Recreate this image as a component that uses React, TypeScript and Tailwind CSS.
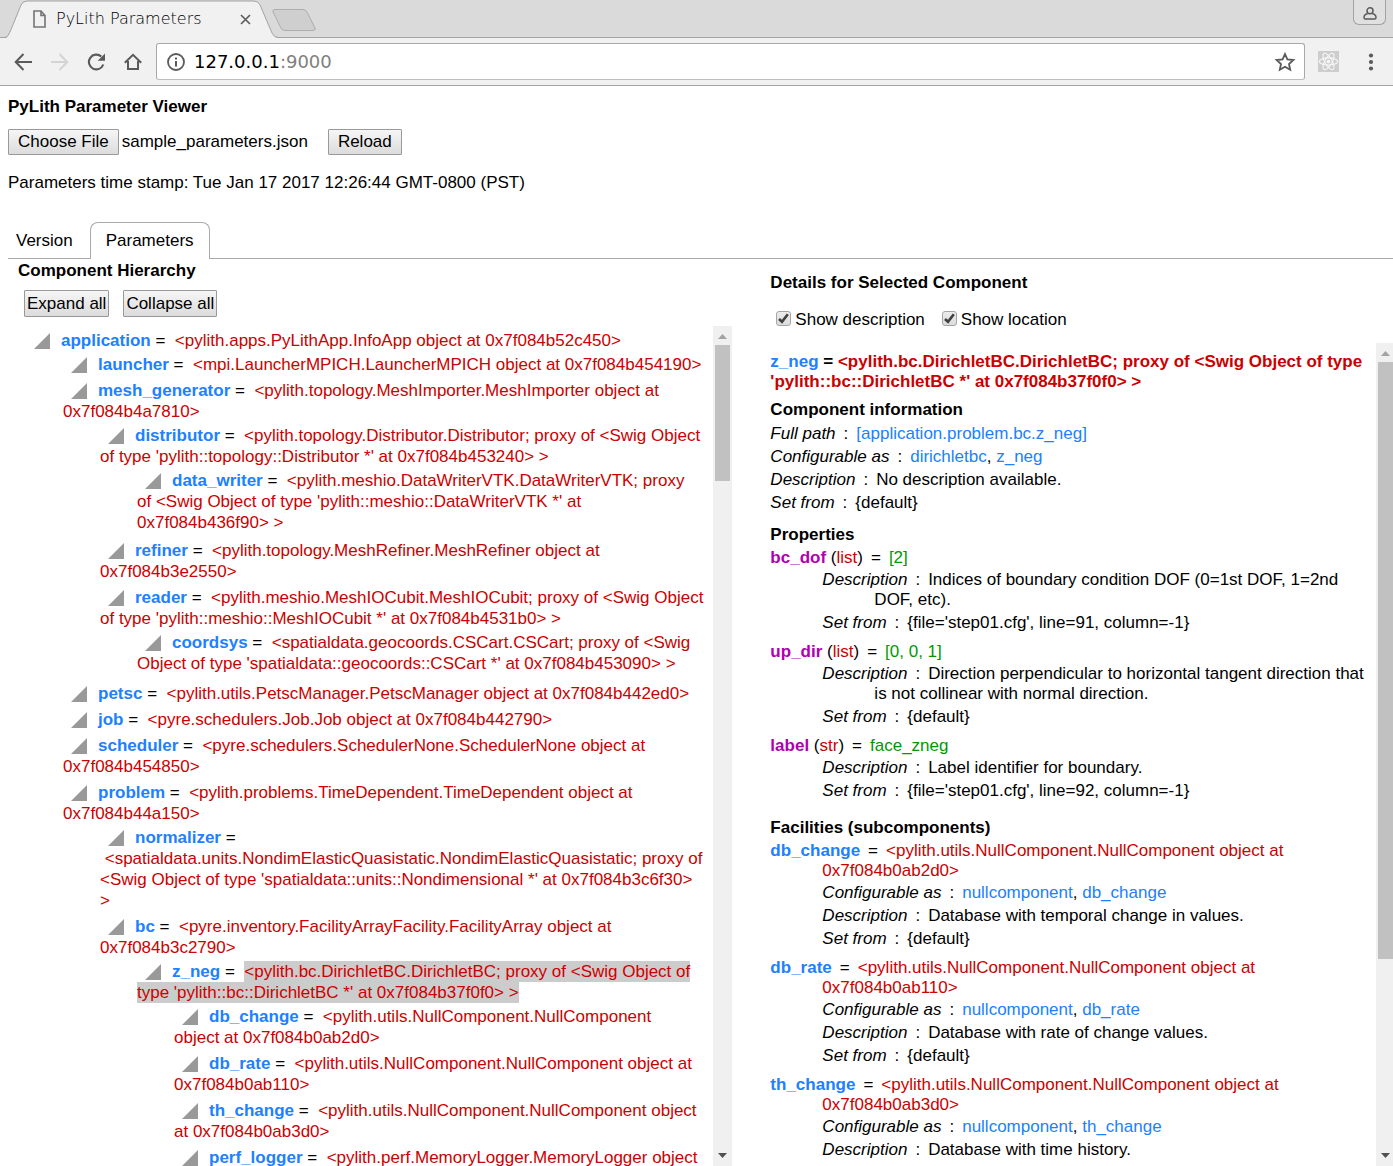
import { Fragment, useState } from "react";
import type { ReactNode } from "react";

type TreeNode = {
  name: string;
  value: string;
  selected?: boolean;
  children?: TreeNode[];
};

type Facility = {
  name: string;
  value: string;
  aliases: string[];
  description: string;
  location: string;
};

const tree: TreeNode = {
  name: "application",
  value: "<pylith.apps.PyLithApp.InfoApp object at 0x7f084b52c450>",
  children: [
    { name: "launcher", value: "<mpi.LauncherMPICH.LauncherMPICH object at 0x7f084b454190>" },
    {
      name: "mesh_generator",
      value: "<pylith.topology.MeshImporter.MeshImporter object at 0x7f084b4a7810>",
      children: [
        {
          name: "distributor",
          value:
            "<pylith.topology.Distributor.Distributor; proxy of <Swig Object of type 'pylith::topology::Distributor *' at 0x7f084b453240> >",
          children: [
            {
              name: "data_writer",
              value:
                "<pylith.meshio.DataWriterVTK.DataWriterVTK; proxy of <Swig Object of type 'pylith::meshio::DataWriterVTK *' at 0x7f084b436f90> >",
            },
          ],
        },
        { name: "refiner", value: "<pylith.topology.MeshRefiner.MeshRefiner object at 0x7f084b3e2550>" },
        {
          name: "reader",
          value:
            "<pylith.meshio.MeshIOCubit.MeshIOCubit; proxy of <Swig Object of type 'pylith::meshio::MeshIOCubit *' at 0x7f084b4531b0> >",
          children: [
            {
              name: "coordsys",
              value:
                "<spatialdata.geocoords.CSCart.CSCart; proxy of <Swig Object of type 'spatialdata::geocoords::CSCart *' at 0x7f084b453090> >",
            },
          ],
        },
      ],
    },
    { name: "petsc", value: "<pylith.utils.PetscManager.PetscManager object at 0x7f084b442ed0>" },
    { name: "job", value: "<pyre.schedulers.Job.Job object at 0x7f084b442790>" },
    { name: "scheduler", value: "<pyre.schedulers.SchedulerNone.SchedulerNone object at 0x7f084b454850>" },
    {
      name: "problem",
      value: "<pylith.problems.TimeDependent.TimeDependent object at 0x7f084b44a150>",
      children: [
        {
          name: "normalizer",
          value:
            "<spatialdata.units.NondimElasticQuasistatic.NondimElasticQuasistatic; proxy of <Swig Object of type 'spatialdata::units::Nondimensional *' at 0x7f084b3c6f30> >",
        },
        {
          name: "bc",
          value: "<pyre.inventory.FacilityArrayFacility.FacilityArray object at 0x7f084b3c2790>",
          children: [
            {
              name: "z_neg",
              value:
                "<pylith.bc.DirichletBC.DirichletBC; proxy of <Swig Object of type 'pylith::bc::DirichletBC *' at 0x7f084b37f0f0> >",
              selected: true,
              children: [
                { name: "db_change", value: "<pylith.utils.NullComponent.NullComponent object at 0x7f084b0ab2d0>" },
                { name: "db_rate", value: "<pylith.utils.NullComponent.NullComponent object at 0x7f084b0ab110>" },
                { name: "th_change", value: "<pylith.utils.NullComponent.NullComponent object at 0x7f084b0ab3d0>" },
                { name: "perf_logger", value: "<pylith.perf.MemoryLogger.MemoryLogger object at 0x7f084b0ab450>" },
              ],
            },
          ],
        },
      ],
    },
  ],
};

const properties = [
  {
    name: "bc_dof",
    type: "list",
    value: "[2]",
    description: "Indices of boundary condition DOF (0=1st DOF, 1=2nd DOF, etc).",
    location: "{file='step01.cfg', line=91, column=-1}",
  },
  {
    name: "up_dir",
    type: "list",
    value: "[0, 0, 1]",
    description: "Direction perpendicular to horizontal tangent direction that is not collinear with normal direction.",
    location: "{default}",
  },
  {
    name: "label",
    type: "str",
    value: "face_zneg",
    description: "Label identifier for boundary.",
    location: "{file='step01.cfg', line=92, column=-1}",
  },
];

const facilities: Facility[] = [
  {
    name: "db_change",
    value: "<pylith.utils.NullComponent.NullComponent object at 0x7f084b0ab2d0>",
    aliases: ["nullcomponent", "db_change"],
    description: "Database with temporal change in values.",
    location: "{default}",
  },
  {
    name: "db_rate",
    value: "<pylith.utils.NullComponent.NullComponent object at 0x7f084b0ab110>",
    aliases: ["nullcomponent", "db_rate"],
    description: "Database with rate of change values.",
    location: "{default}",
  },
  {
    name: "th_change",
    value: "<pylith.utils.NullComponent.NullComponent object at 0x7f084b0ab3d0>",
    aliases: ["nullcomponent", "th_change"],
    description: "Database with time history.",
    location: "{default}",
  },
];

function BrowserChrome() {
  return (
    <header className="shrink-0 font-['DejaVu_Sans',sans-serif]">
      <div className="relative flex h-[38px] items-start border-b border-[#a3a3a3] bg-[#dadada]">
        <div className="relative h-[38px] w-[276px] shrink-0">
          <svg className="absolute top-0 left-0" width="320" height="38" viewBox="0 0 320 38" fill="none">
            <path d="M6 38 C8 37 9 35 10 32 L21 5 Q23 1 27 1 H254 Q258 1 260 5 L272 33 Q274 37 277 38 Z" fill="#f1f1f1" />
            <path
              d="M0 37.5 H5 Q8 37 10 32 L21 5 Q23 1 27 1 H254 Q258 1 260 5 L272 33 Q274 37.500 278 37.500"
              stroke="#a3a3a3"
            />
            <path
              d="M275 9.500 H303 Q306 9.500 307.500 13 L315 28 Q316 30.500 313 30.500 H285 Q282 30.500 281 28 L273 12 Q272 9.500 275 9.500 Z"
              fill="#cfcfcf"
              stroke="#adadad"
            />
          </svg>
          <div className="relative flex h-[38px] items-center pl-[33px] text-base text-black">
            <svg width="13" height="18" viewBox="0 0 13 18" fill="none" stroke="#747474" strokeWidth="1.600">
              <path d="M1 1 H8 L12 5.500 V17 H1 Z M8 1 V5.500 H12" />
            </svg>
            <span className="ml-[10px] font-extralight">PyLith Parameters</span>
            <button aria-label="Close tab" className="absolute top-[14px] left-[240px]">
              <svg width="11" height="11" viewBox="0 0 11 11" stroke="#5a5a5a" strokeWidth="1.600">
                <path d="M1 1 L10 10 M10 1 L1 10" />
              </svg>
            </button>
          </div>
        </div>
        <button
          aria-label="Profile"
          className="mr-[7px] ml-auto flex h-[25px] w-[33px] items-end justify-center rounded-b-md border-x border-b border-[#a3a3a3] bg-[#e0e0e0] pb-[4px]"
        >
          <svg width="14" height="13" viewBox="0 0 14 13" fill="none" stroke="#5a5a5a" strokeWidth="1.500">
            <circle cx="7" cy="3.800" r="3" />
            <path d="M4.800 6.600 Q1 7.500 1 10.500 Q1 12 2.500 12 H11.500 Q13 12 13 10.500 Q13 7.500 9.200 6.600" />
          </svg>
        </button>
      </div>
      <div className="flex h-12 items-center border-b border-[#a3a3a3] bg-[#f1f1f1] pl-[14px]">
        <button aria-label="Back">
          <svg width="19" height="18" viewBox="0 0 19 18" fill="none" stroke="#5a5a5a" strokeWidth="2">
            <path d="M18 9 H2 M9.500 1 L1.700 9 L9.500 17" />
          </svg>
        </button>
        <button aria-label="Forward" className="ml-[17px]">
          <svg width="19" height="18" viewBox="0 0 19 18" fill="none" stroke="#d4d4d4" strokeWidth="2">
            <path d="M1 9 H17 M9.500 1 L17.300 9 L9.500 17" />
          </svg>
        </button>
        <button aria-label="Refresh" className="ml-[18px]">
          <svg width="19" height="18" viewBox="0 0 19 18" fill="none">
            <path d="M16.300 11.500 A7.400 7.400 0 1 1 14.300 3.500" stroke="#5a5a5a" strokeWidth="2.100" />
            <path d="M18 0.500 V7.800 H10.700 Z" fill="#5a5a5a" />
          </svg>
        </button>
        <button aria-label="Home" className="ml-[18px]">
          <svg width="18" height="18" viewBox="0 0 18 18" fill="none" stroke="#5a5a5a" strokeWidth="2">
            <path d="M0.800 9.800 L9 1.800 L17.200 9.800 M4 8 V16 H14 V8" />
          </svg>
        </button>
        <div className="ml-[14px] flex h-[37px] flex-1 items-center rounded-[3px] border border-[#a9a9a9] border-b-[#bdbdbd] bg-white px-[10px]">
          <svg width="18" height="18" viewBox="0 0 18 18" fill="none" stroke="#5a5a5a" strokeWidth="1.800">
            <circle cx="9" cy="9" r="8" />
            <path d="M9 8 V13.500 M9 4.500 V6.500" strokeWidth="2" />
          </svg>
          <div className="ml-[9px] flex-1 text-lg text-black">
            127.0.0.1<span className="text-[#808080]">:9000</span>
          </div>
          <button aria-label="Bookmark this page" className="-mr-[5px]">
            <svg width="28" height="20" viewBox="0 0 28 20" fill="none" stroke="#5a5a5a" strokeWidth="1.800">
              <path d="M14 2 L16.400 7.400 L22.400 8 L18 12 L19.200 17.800 L14 14.800 L8.800 17.800 L10 12 L5.600 8 L11.600 7.400 Z" />
            </svg>
          </button>
        </div>
        <button aria-label="React Developer Tools" className="ml-[13px] bg-[#cdcdcd]">
          <svg width="21" height="21" viewBox="0 0 21 21" fill="none" stroke="#f7f7f7" strokeWidth="1.100">
            <ellipse cx="10.500" cy="10.500" rx="9.200" ry="3.600" />
            <ellipse cx="10.500" cy="10.500" rx="9.200" ry="3.600" transform="rotate(60 10.500 10.500)" />
            <ellipse cx="10.500" cy="10.500" rx="9.200" ry="3.600" transform="rotate(120 10.500 10.500)" />
            <circle cx="10.500" cy="10.500" r="1.300" fill="#f7f7f7" />
          </svg>
        </button>
        <button aria-label="Menu" className="mr-[19px] ml-[29px]">
          <svg width="6" height="18" viewBox="0 0 6 18" fill="#5a5a5a">
            <circle cx="3" cy="2.500" r="2.100" />
            <circle cx="3" cy="9" r="2.100" />
            <circle cx="3" cy="15.500" r="2.100" />
          </svg>
        </button>
      </div>
    </header>
  );
}

function Button({ children, className }: { children: ReactNode; className: string }) {
  return (
    <button
      className={`rounded-[1px] border border-[#999] bg-linear-to-b from-[#f6f6f6] to-[#dcdcdc] text-center whitespace-nowrap ${className}`}
    >
      {children}
    </button>
  );
}

function Scrollbar({ thumb, width }: { thumb: string; width: string }) {
  return (
    <div className={`flex shrink-0 flex-col items-center bg-[#f0f0f0] ${width}`}>
      <svg className="h-[19px] shrink-0" width="9" height="19" viewBox="0 0 9 19" fill="#a3a3a3">
        <path d="M0 13 L4.500 8 L9 13 Z" />
      </svg>
      <div className={`w-[15px] bg-[#c1c1c1] ${thumb}`} />
      <svg className="mt-auto h-[19px] shrink-0" width="9" height="19" viewBox="0 0 9 19" fill="#505050">
        <path d="M0 6 L9 6 L4.500 11 Z" />
      </svg>
    </div>
  );
}

function TreeItem({ node }: { node: TreeNode }) {
  return (
    <li className="pt-[3px] pb-[2px]">
      <div>
        <svg className="mr-[11px] ml-2 inline-block align-[-3px]" width="16" height="16" viewBox="0 0 16 16" fill="#999">
          <path d="M0 16 L16 0 V16 Z" />
        </svg>
        <span className="font-bold text-[#2080ff]">{node.name}</span>
        {" = "}
        &nbsp;
        <span className={node.selected ? "bg-[#ccc] py-px text-[#c00]" : "text-[#c00]"}>{node.value}</span>
      </div>
      {node.children && (
        <ul className="ml-[37px] pr-[3px]">
          {node.children.map((child) => (
            <TreeItem key={child.name} node={child} />
          ))}
        </ul>
      )}
    </li>
  );
}

function Field({ label, nested, children }: { label: string; nested?: boolean; children: ReactNode }) {
  return (
    <p className={nested ? "mb-[3px] pl-[104px] -indent-[52px]" : "mb-[3px] pl-[52px] -indent-[52px]"}>
      <i>{label}</i>
      <span className="mx-2">:</span>
      {children}
    </p>
  );
}

function Aliases({ names }: { names: string[] }) {
  return (
    <>
      {names.map((name, i) => (
        <Fragment key={name}>
          {i > 0 && ", "}
          <span className="text-[#2080ff]">{name}</span>
        </Fragment>
      ))}
    </>
  );
}

function Checkbox({ label, checked, onChange }: { label: string; checked: boolean; onChange: (v: boolean) => void }) {
  return (
    <label className="flex items-center">
      <span className="relative mr-1 mb-[3px] block size-[15px]">
        <input
          type="checkbox"
          checked={checked}
          onChange={(e) => onChange(e.target.checked)}
          className="block size-[15px] appearance-none rounded-[3px] border border-[#a5a5a5] bg-linear-to-b from-[#ececec] to-[#dcdcdc]"
        />
        {checked && (
          <svg
            className="pointer-events-none absolute top-0 left-0"
            width="15"
            height="15"
            viewBox="0 0 15 15"
            fill="none"
            stroke="#404040"
            strokeWidth="2.600"
          >
            <path d="M3 8 L6 10.800 L11.800 3.200" />
          </svg>
        )}
      </span>
      {label}
    </label>
  );
}

function Hierarchy() {
  return (
    <section className="flex w-[52vw] shrink-0 flex-col">
      <h2 className="mt-[2px] ml-[10px] font-bold">Component Hierarchy</h2>
      <div className="mt-[9px] mb-[9px] ml-4 flex gap-[14px]">
        <Button className="h-[27px] px-[2px]">Expand all</Button>
        <Button className="h-[27px] px-[2px]">Collapse all</Button>
      </div>
      <div className="flex min-h-0 flex-1">
        <ul className="min-w-0 flex-1 overflow-hidden pt-px pr-[2px] pl-[18px] leading-[21px]">
          <TreeItem node={tree} />
        </ul>
        <Scrollbar thumb="h-[136px]" width="w-[19px]" />
      </div>
    </section>
  );
}

function Details() {
  const [showDescription, setShowDescription] = useState(true);
  const [showLocation, setShowLocation] = useState(true);

  return (
    <section className="ml-[38px] flex min-w-0 flex-1 flex-col">
      <h2 className="mt-[14px] font-bold">Details for Selected Component</h2>
      <div className="mt-[17px] mb-[13px] ml-[6px] flex gap-[17px]">
        <Checkbox label="Show description" checked={showDescription} onChange={setShowDescription} />
        <Checkbox label="Show location" checked={showLocation} onChange={setShowLocation} />
      </div>
      <div className="flex min-h-0 flex-1">
        <div className="min-w-0 flex-1 overflow-hidden pt-[9px] pr-2">
          <h3 className="font-bold text-[#c00]">
            <span className="text-[#2080ff]">z_neg</span>
            <span className="text-black"> = </span>
            {"<pylith.bc.DirichletBC.DirichletBC; proxy of <Swig Object of type 'pylith::bc::DirichletBC *' at 0x7f084b37f0f0> >"}
          </h3>

          <h4 className="mt-2 mb-1 font-bold">Component information</h4>
          <Field label="Full path">
            <span className="text-[#2080ff]">[application.problem.bc.z_neg]</span>
          </Field>
          <Field label="Configurable as">
            <Aliases names={["dirichletbc", "z_neg"]} />
          </Field>
          {showDescription && <Field label="Description">No description available.</Field>}
          {showLocation && <Field label="Set from">{"{default}"}</Field>}

          <h4 className="mt-3 mb-[3px] font-bold">Properties</h4>
          {properties.map((p) => (
            <div key={p.name} className="mb-[9px]">
              <p className="mb-[2px]">
                <b className="text-[#b000b0]">{p.name}</b> (<span className="text-[#c00]">{p.type}</span>)
                <span className="mx-2">=</span>
                <span className="text-[#090]">{p.value}</span>
              </p>
              {showDescription && (
                <Field label="Description" nested>
                  {p.description}
                </Field>
              )}
              {showLocation && (
                <Field label="Set from" nested>
                  {p.location}
                </Field>
              )}
            </div>
          ))}

          <h4 className="mt-[17px] mb-[3px] font-bold">Facilities (subcomponents)</h4>
          {facilities.map((f) => (
            <div key={f.name} className="mb-[9px]">
              <p className="mb-[2px] pl-[52px] -indent-[52px]">
                <b className="text-[#2080ff]">{f.name}</b>
                <span className="mx-2">=</span>
                <span className="text-[#c00]">{f.value}</span>
              </p>
              <Field label="Configurable as" nested>
                <Aliases names={f.aliases} />
              </Field>
              {showDescription && (
                <Field label="Description" nested>
                  {f.description}
                </Field>
              )}
              {showLocation && (
                <Field label="Set from" nested>
                  {f.location}
                </Field>
              )}
            </div>
          ))}
        </div>
        <Scrollbar thumb="h-[597px]" width="w-[17px] pl-[2px]" />
      </div>
    </section>
  );
}

export default function App() {
  return (
    <div className="flex h-screen flex-col overflow-hidden bg-white font-['Liberation_Sans',Arial,sans-serif] text-[17px] leading-5 text-black">
      <BrowserChrome />
      <main className="flex min-h-0 flex-1 flex-col pl-2">
        <h1 className="mt-[11px] font-bold">PyLith Parameter Viewer</h1>
        <div className="mt-3 flex items-center">
          <Button className="h-[26px] px-[9px]">Choose File</Button>
          <span className="ml-[3px]">sample_parameters.json</span>
          <Button className="ml-5 h-[26px] px-[9px]">Reload</Button>
        </div>
        <p className="mt-[18px]">Parameters time stamp: Tue Jan 17 2017 12:26:44 GMT-0800 (PST)</p>

        <nav className="mt-[29px] flex h-[37px] shrink-0 border-b border-[#aaa]">
          <button className="px-2 pt-px">Version</button>
          <button className="ml-[9px] h-[37px] rounded-t-lg border border-b-0 border-[#aaa] bg-white px-[15px]">
            Parameters
          </button>
        </nav>

        <div className="flex min-h-0 flex-1">
          <Hierarchy />
          <Details />
        </div>
      </main>
    </div>
  );
}
